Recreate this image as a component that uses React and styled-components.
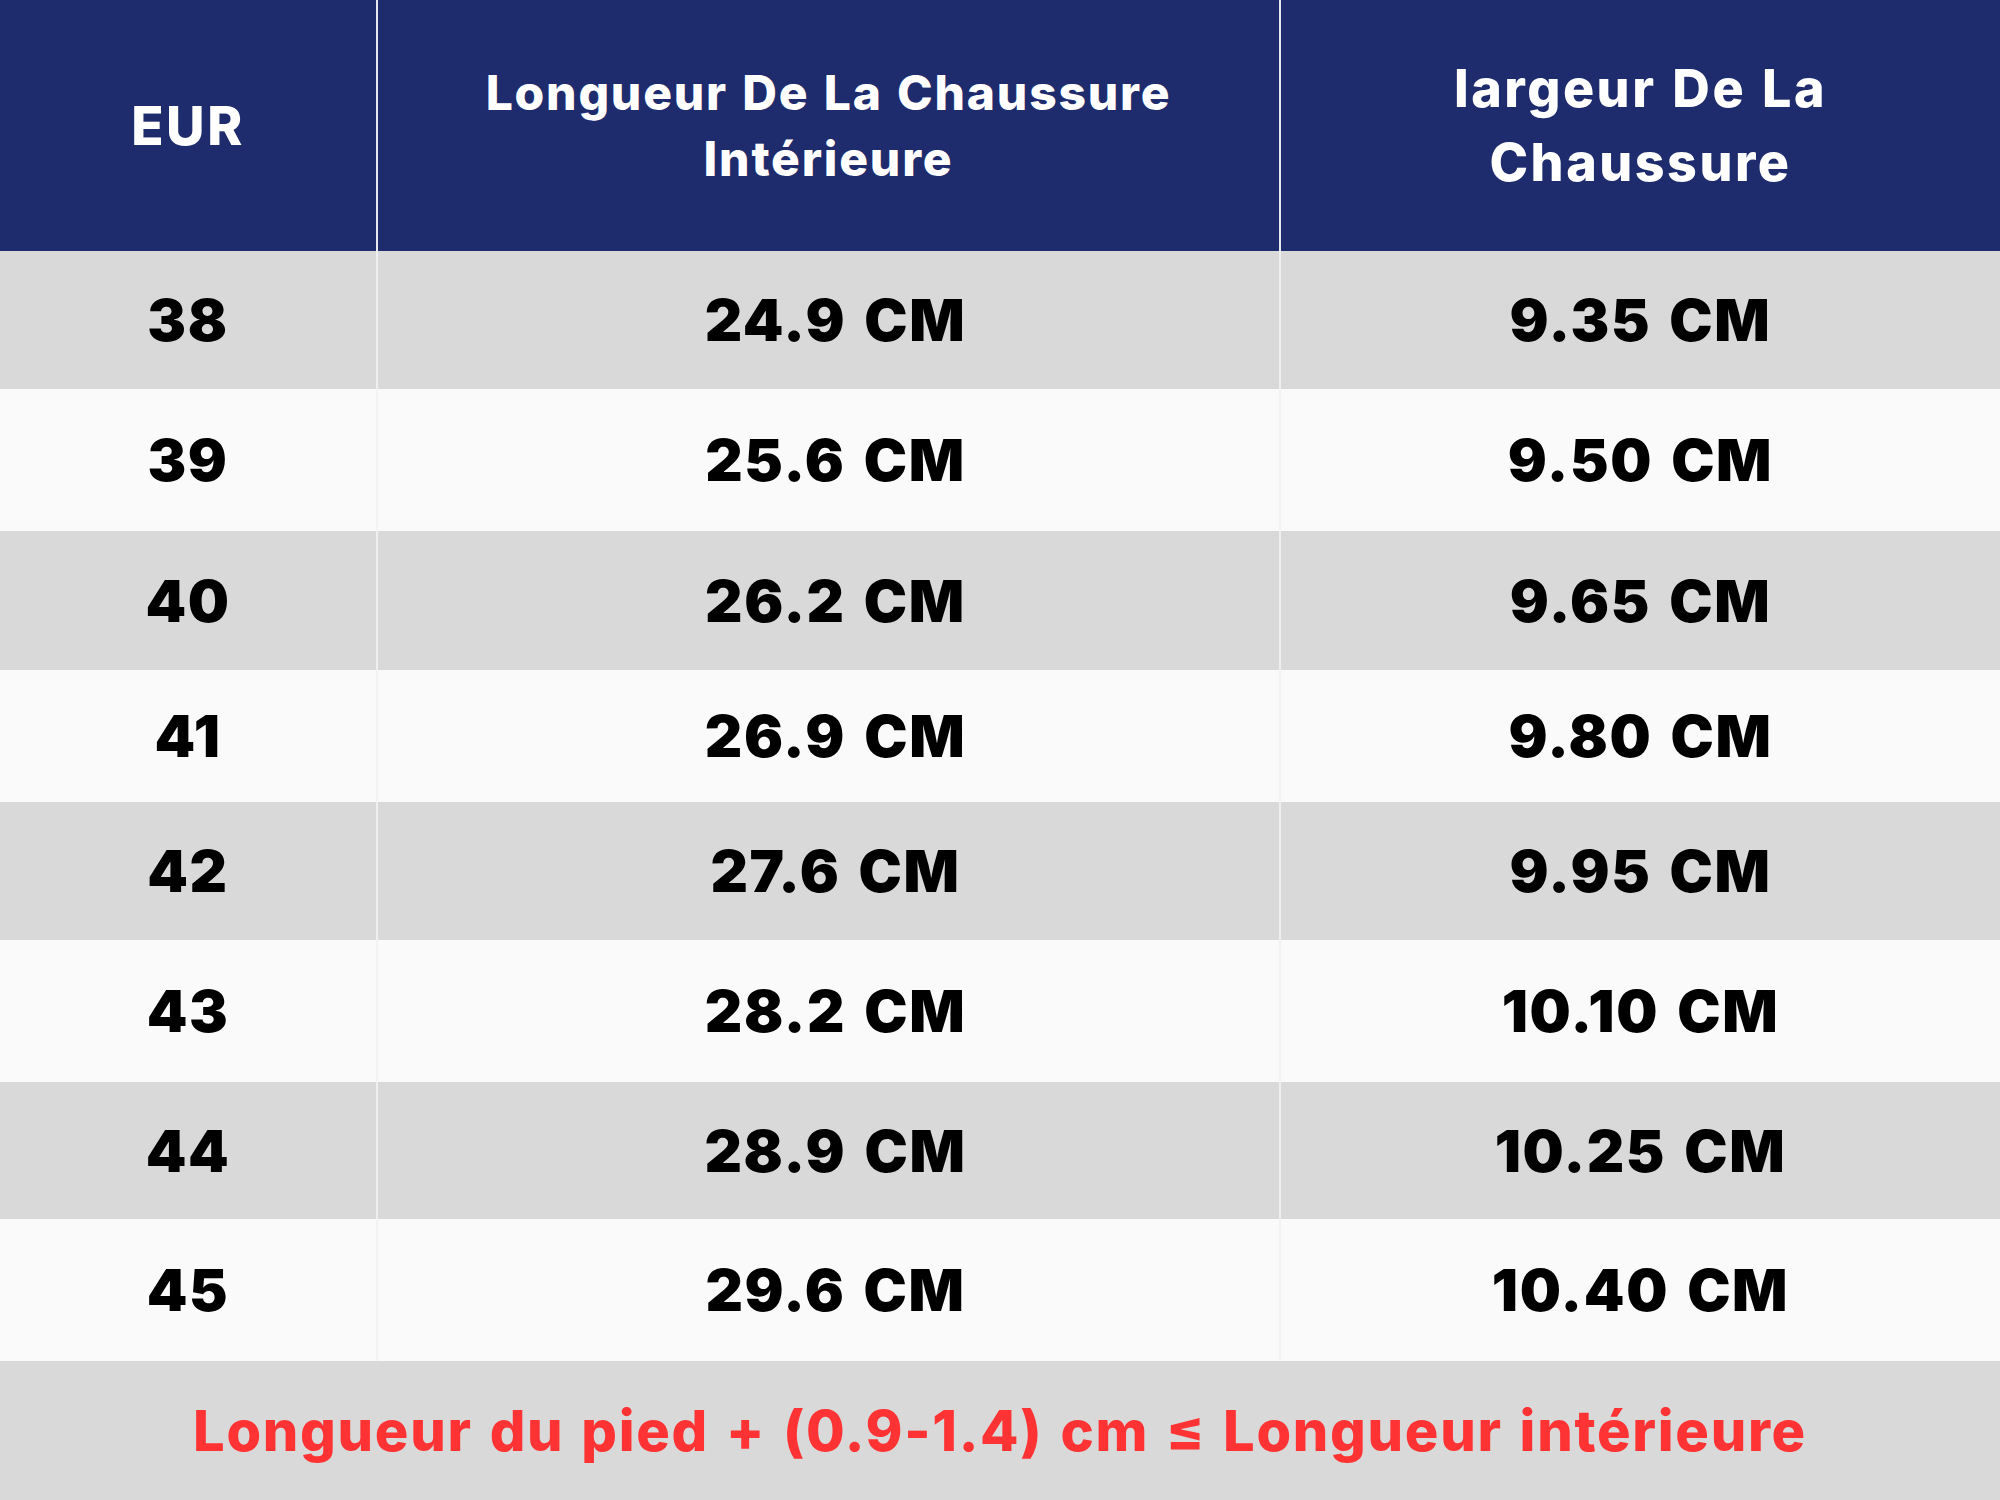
import React from 'react';
import styled, { createGlobalStyle } from 'styled-components';

const GlobalStyle = createGlobalStyle`
  html, body {
    margin: 0;
    padding: 0;
    background: #fafafa;
  }
  body {
    font-family: Inter, "Open Sans", sans-serif;
  }
`;

const sizes = [
  { eur: '38', length: '24.9 CM', width: '9.35 CM', height: 138 },
  { eur: '39', length: '25.6 CM', width: '9.50 CM', height: 142 },
  { eur: '40', length: '26.2 CM', width: '9.65 CM', height: 139 },
  { eur: '41', length: '26.9 CM', width: '9.80 CM', height: 132 },
  { eur: '42', length: '27.6 CM', width: '9.95 CM', height: 138 },
  { eur: '43', length: '28.2 CM', width: '10.10 CM', height: 142 },
  { eur: '44', length: '28.9 CM', width: '10.25 CM', height: 137 },
  { eur: '45', length: '29.6 CM', width: '10.40 CM', height: 142 },
];

const Chart = styled.div`
  width: 2000px;
  height: 1500px;
  display: flex;
  flex-direction: column;
  overflow: hidden;
`;

const Row = styled.div`
  display: grid;
  grid-template-columns: 376px 903px 721px;
  height: ${(p) => p.$height}px;
  background: ${(p) => (p.$shaded ? '#d9d9d9' : '#fafafa')};
`;

const HeaderRow = styled(Row)`
  background: #1e2b6d;
`;

const Cell = styled.div`
  display: flex;
  align-items: center;
  justify-content: center;
  text-align: center;
  padding-left: ${(p) => p.$offset || 0}px;
  border-left: 2px solid ${(p) => (p.$shaded ? '#efefef' : '#f3f3f3')};
  &:first-child {
    border-left: none;
  }
  color: #000;
  font-weight: 900;
  font-size: 58px;
  letter-spacing: 1.6px;
  word-spacing: 5px;
`;

const HeadCell = styled(Cell)`
  border-left-color: #e6e8ef;
  color: #fff;
  font-weight: 800;
  font-size: ${(p) => p.$size}px;
  line-height: ${(p) => p.$lh}px;
  letter-spacing: ${(p) => p.$track}px;
  word-spacing: 2px;
`;

const Footer = styled.div`
  height: 139px;
  background: #d9d9d9;
  display: flex;
  align-items: center;
  justify-content: center;
  color: #ff3333;
  font-weight: 800;
  font-size: 56px;
  letter-spacing: 1.7px;
  word-spacing: 3px;
`;

export default function App() {
  return (
    <>
      <GlobalStyle />
      <Chart>
        <HeaderRow $height={251}>
          <HeadCell $size={53} $lh={60} $track={2.6}>EUR</HeadCell>
          <HeadCell $size={48} $lh={66} $track={1.8}>
            Longueur De La Chaussure
            <br />
            Intérieure
          </HeadCell>
          <HeadCell $size={52} $lh={74} $track={2.5}>
            largeur De La
            <br />
            Chaussure
          </HeadCell>
        </HeaderRow>
        {sizes.map((s, i) => (
          <Row key={s.eur} $height={s.height} $shaded={i % 2 === 0}>
            <Cell $shaded={i % 2 === 0}>{s.eur}</Cell>
            <Cell $shaded={i % 2 === 0} $offset={14}>{s.length}</Cell>
            <Cell $shaded={i % 2 === 0}>{s.width}</Cell>
          </Row>
        ))}
        <Footer>Longueur du pied + (0.9-1.4) cm ≤ Longueur intérieure</Footer>
      </Chart>
    </>
  );
}
